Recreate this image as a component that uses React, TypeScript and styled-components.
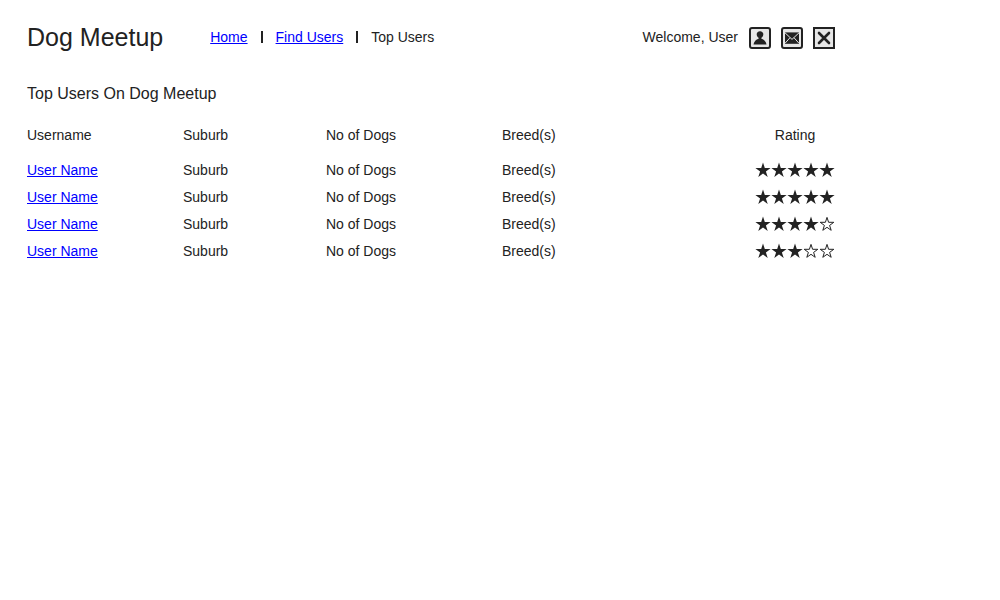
import React from "react";
import styled, { createGlobalStyle } from "styled-components";

const INK = "#222222";

const GlobalStyle = createGlobalStyle`
  * { box-sizing: border-box; }
  body {
    margin: 0;
    background: #ffffff;
    color: ${INK};
    font-family: "Liberation Sans", Arial, sans-serif;
    font-size: 14px;
    line-height: 18px;
  }
`;

const Page = styled.div`
  max-width: 862px;
  padding: 22px 27px;
`;

const Header = styled.header`
  display: flex;
  align-items: center;
`;

const SiteTitle = styled.h1`
  margin: 0 47px 0 0;
  font-size: 25px;
  font-weight: 400;
  line-height: 30px;
  padding-bottom: 2px;
  white-space: nowrap;
`;

const Nav = styled.nav`
  display: flex;
  align-items: center;
  gap: 13px;
  padding-bottom: 2px;
  white-space: nowrap;
`;

const Link = styled.a`
  color: #0000ff;
  text-decoration: underline;
`;

const Separator = styled.span`
  width: 2px;
  height: 12px;
  background: ${INK};
`;

const Account = styled.div`
  display: flex;
  align-items: center;
  gap: 10px;
  margin-left: auto;
  white-space: nowrap;
`;

const Greeting = styled.span`
  padding: 0 1px 2px 0;
`;

const IconButton = styled.button<{ $square?: boolean }>`
  display: flex;
  align-items: center;
  justify-content: center;
  width: 22px;
  height: 22px;
  padding: 0;
  border: 2px solid ${INK};
  border-radius: ${({ $square }) => ($square ? "0" : "3px")};
  background: #e6e6e6;
  color: ${INK};
  cursor: pointer;
`;

const SectionTitle = styled.h2`
  margin: 30px 0 22px;
  font-size: 16px;
  font-weight: 400;
  line-height: 20px;
`;

const UserTable = styled.table`
  width: 100%;
  table-layout: fixed;
  border-collapse: collapse;
`;

const Column = styled.col<{ $width?: number }>`
  width: ${({ $width }) => ($width ? `${$width}px` : "auto")};
`;

const HeadCell = styled.th<{ $center?: boolean }>`
  height: 30px;
  padding: 0 0 12px;
  font-weight: 400;
  text-align: ${({ $center }) => ($center ? "center" : "left")};
`;

const Cell = styled.td`
  height: 27px;
  padding: 0;
`;

const Stars = styled.div`
  display: flex;
`;

const STAR = "M8 0.6 9.8 6.1H15.6L10.9 9.5 12.7 15 8 11.6 3.3 15 5.1 9.5 0.4 6.1H6.2Z";
const STAR_OUTLINE = "M8 1.4 9.6 6.3H14.8L10.6 9.4 12.2 14.3 8 11.3 3.8 14.3 5.4 9.4 1.2 6.3H6.4Z";

function Rating({ value }: { value: number }) {
  return (
    <Stars role="img" aria-label={`${value} out of 5`}>
      {[1, 2, 3, 4, 5].map((n) => (
        <svg key={n} width="16" height="16" viewBox="0 0 16 16">
          {n <= value ? (
            <path d={STAR} fill={INK} />
          ) : (
            <path d={STAR_OUTLINE} fill="#ffffff" stroke={INK} strokeWidth="1" />
          )}
        </svg>
      ))}
    </Stars>
  );
}

const ratings = [5, 5, 4, 3];

export default function App() {
  return (
    <>
      <GlobalStyle />
      <Page>
        <Header>
          <SiteTitle>Dog Meetup</SiteTitle>
          <Nav aria-label="Main">
            <Link href="#home">Home</Link>
            <Separator />
            <Link href="#find">Find Users</Link>
            <Separator />
            <span aria-current="page">Top Users</span>
          </Nav>
          <Account>
            <Greeting>Welcome, User</Greeting>
            <IconButton aria-label="Profile">
              <svg width="18" height="18" viewBox="0 0 18 18" fill="currentColor">
                <path d="M9 2.3C11 2.3 12.3 3.6 12.3 5.4 12.3 6.9 11.3 7.9 10.4 8.7V9.8C13 10.8 15 12.3 15.5 15.6H2.5C3 12.3 5 10.8 7.6 9.8V8.7C6.7 7.9 5.7 6.9 5.7 5.4 5.7 3.6 7 2.3 9 2.3Z" />
              </svg>
            </IconButton>
            <IconButton aria-label="Messages">
              <svg width="18" height="18" viewBox="0 0 18 18">
                <rect x="2" y="3.4" width="14" height="11.4" fill={INK} />
                <path
                  d="M2 3.8 9 10.4 16 3.8M2 14.3 7 8.7M16 14.3 11 8.7"
                  fill="none"
                  stroke="#e6e6e6"
                  strokeWidth="1"
                />
              </svg>
            </IconButton>
            <IconButton $square aria-label="Close">
              <svg width="18" height="18" viewBox="0 0 18 18">
                <path
                  d="M4 4 14 14M14 4 4 14"
                  stroke={INK}
                  strokeWidth="2.6"
                  strokeLinecap="round"
                />
              </svg>
            </IconButton>
          </Account>
        </Header>
        <main>
          <SectionTitle>Top Users On Dog Meetup</SectionTitle>
          <UserTable>
            <colgroup>
              <Column $width={156} />
              <Column $width={143} />
              <Column $width={176} />
              <Column />
              <Column $width={80} />
            </colgroup>
            <thead>
              <tr>
                <HeadCell scope="col">Username</HeadCell>
                <HeadCell scope="col">Suburb</HeadCell>
                <HeadCell scope="col">No of Dogs</HeadCell>
                <HeadCell scope="col">Breed(s)</HeadCell>
                <HeadCell scope="col" $center>Rating</HeadCell>
              </tr>
            </thead>
            <tbody>
              {ratings.map((rating, i) => (
                <tr key={i}>
                  <Cell><Link href="#user">User Name</Link></Cell>
                  <Cell>Suburb</Cell>
                  <Cell>No of Dogs</Cell>
                  <Cell>Breed(s)</Cell>
                  <Cell><Rating value={rating} /></Cell>
                </tr>
              ))}
            </tbody>
          </UserTable>
        </main>
      </Page>
    </>
  );
}
